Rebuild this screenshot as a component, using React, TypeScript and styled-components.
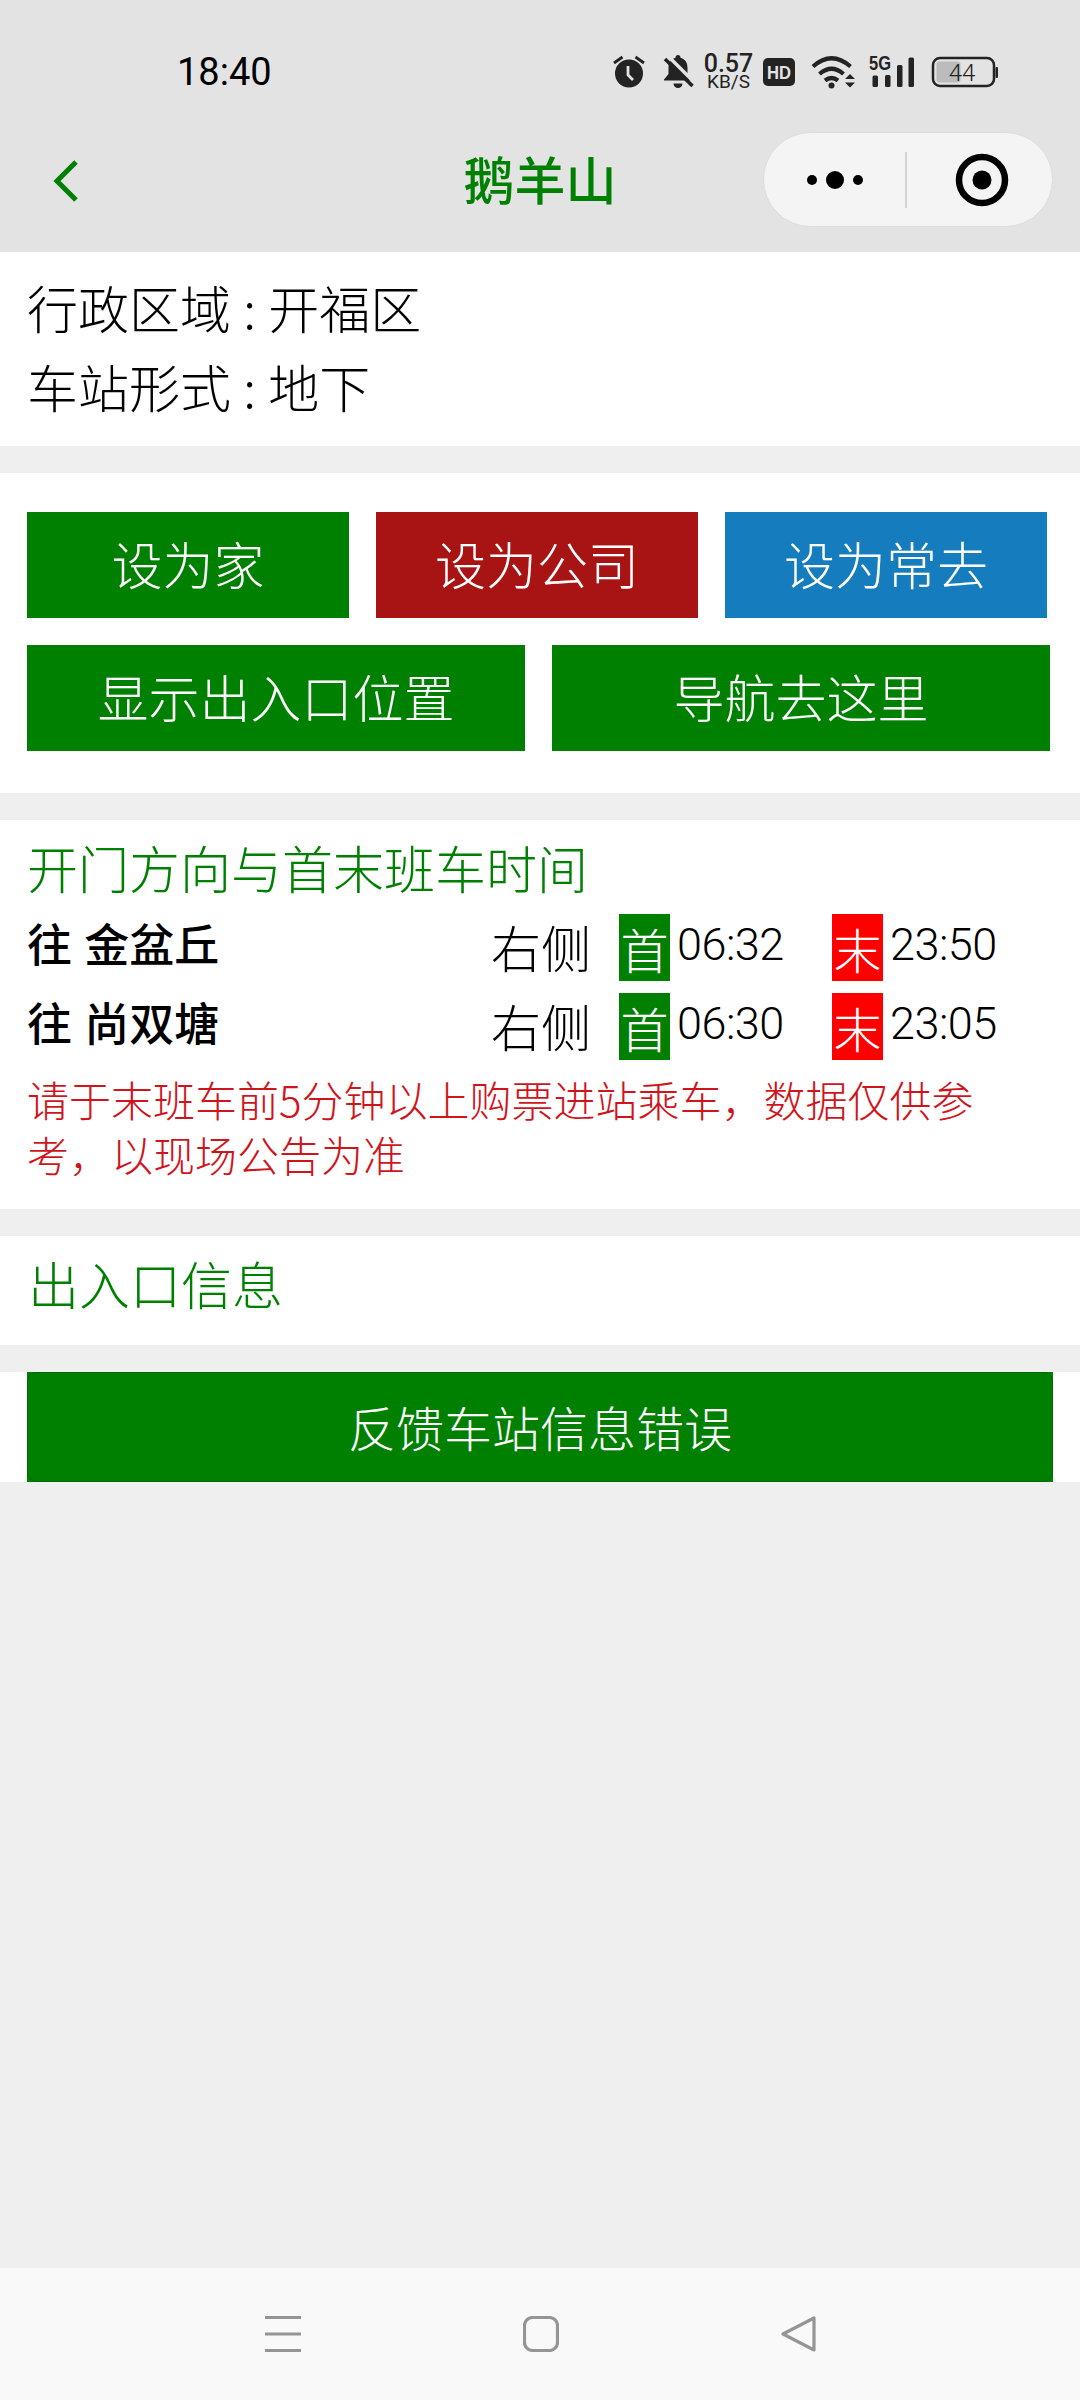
import React from "react";
import styled, { createGlobalStyle } from "styled-components";

const CJK = `"Noto Sans CJK SC", "Noto Sans", sans-serif`;
const GREEN = "#008000";
const ICON = "#232323";

const Global = createGlobalStyle`
  html, body { margin: 0; padding: 0; background: #efefef; }
  #root { width: 1080px; height: 2400px; overflow: hidden; }
  * { box-sizing: border-box; }
`;

const Page = styled.div`
  width: 1080px;
  height: 2400px;
  display: flex;
  flex-direction: column;
  background: #efefef;
  font-family: ${CJK};
  font-weight: 200;
  color: #000;
`;

const Header = styled.header`
  height: 252px;
  background: #e3e3e3;
  display: flex;
  flex-direction: column;
  flex: none;
`;

const StatusBar = styled.div`
  height: 128px;
  padding: 15px 0 0 177px;
  display: flex;
  align-items: center;
`;

const Clock = styled.span`
  font-family: Roboto, sans-serif;
  font-size: 38px;
  font-weight: 400;
  width: 436px;
`;

const StatusIcons = styled.div`
  display: flex;
  align-items: center;
  height: 40px;
`;

const StatusGlyph = styled.svg<{ $mr?: number; $mt?: number }>`
  flex: none;
  margin-right: ${(p) => p.$mr ?? 0}px;
  margin-top: ${(p) => p.$mt ?? 0}px;
`;

const Speed = styled.div`
  width: 49px;
  margin: 0 10px 0 10px;
  display: flex;
  flex-direction: column;
  align-items: center;
  font-family: Roboto, sans-serif;
  color: ${ICON};
  font-weight: 500;
`;

const SpeedValue = styled.span`
  font-size: 25px;
  height: 20px;
  line-height: 20px;
`;

const SpeedUnit = styled.span`
  font-size: 19px;
  height: 15px;
  line-height: 15px;
  font-weight: 400;
`;

const NavBar = styled.div`
  position: relative;
  flex: 1;
  display: flex;
  align-items: center;
  justify-content: center;
`;

const BackIcon = styled.svg`
  position: absolute;
  left: 52px;
  top: 31px;
`;

const NavTitle = styled.h1`
  margin: 0;
  font-size: 51px;
  font-weight: 500;
  color: ${GREEN};
  position: relative;
  top: -12px;
`;

const Capsule = styled.div`
  position: absolute;
  left: 763px;
  top: 4px;
  width: 290px;
  height: 95px;
  border-radius: 48px;
  background: #f4f4f4;
  border: 1px solid #dcdcdc;
  display: flex;
  align-items: center;
`;

const CapsulePart = styled.div<{ $pl?: number }>`
  flex: 1;
  height: 100%;
  padding-left: ${(p) => p.$pl ?? 0}px;
  display: flex;
  align-items: center;
  justify-content: center;
`;

const CapsuleDivider = styled.div`
  width: 2px;
  height: 56px;
  background: #d4d4d4;
`;

const Section = styled.section<{ $h: number; $mt?: number }>`
  flex: none;
  height: ${(p) => p.$h}px;
  margin-top: ${(p) => p.$mt ?? 27}px;
  background: #fff;
`;

const InfoSection = styled(Section)`
  padding: 16px 0 0 27px;
`;

const InfoLine = styled.div`
  font-size: 51px;
  line-height: 79px;
  color: #000;
  white-space: pre;
  word-spacing: 1px;
`;

const ButtonsSection = styled(Section)`
  padding: 39px 27px 0;
  display: flex;
  flex-direction: column;
  gap: 27px;
`;

const ButtonRow = styled.div`
  display: flex;
  gap: 27px;
`;

const ActionButton = styled.div<{ $bg: string; $w: number }>`
  width: ${(p) => p.$w}px;
  height: 106px;
  background: ${(p) => p.$bg};
  color: #fff;
  font-size: 51px;
  display: flex;
  align-items: center;
  justify-content: center;
  padding-bottom: 5px;
`;

const TimesSection = styled(Section)`
  padding: 19px 27px 0;
`;

const SectionTitle = styled.div`
  color: ${GREEN};
  font-size: 51px;
  line-height: 56px;
`;

const TimeRows = styled.div`
  margin-top: 19px;
  display: flex;
  flex-direction: column;
  gap: 12px;
`;

const TimeRow = styled.div`
  height: 67px;
  display: flex;
  align-items: center;
`;

const Direction = styled.div`
  width: 464px;
  font-size: 45px;
  font-weight: 500;
  word-spacing: 2px;
  position: relative;
  top: -5px;
`;

const Side = styled.div`
  width: 128px;
  font-size: 50px;
  color: #000;
  position: relative;
  top: -2px;
`;

const Tag = styled.div<{ $bg: string }>`
  width: 51px;
  height: 67px;
  background: ${(p) => p.$bg};
  color: #fff;
  font-size: 48px;
  display: flex;
  align-items: center;
  justify-content: center;
`;

const TimeText = styled.div`
  width: 162px;
  padding-left: 7px;
  font-size: 45px;
  letter-spacing: -0.5px;
  font-family: Roboto, sans-serif;
  font-weight: 300;
  position: relative;
  top: -3px;
  color: #000;
`;

const Notice = styled.div`
  margin-top: 11px;
  color: #d0141c;
  font-size: 42px;
  line-height: 55px;
  width: 1000px;
`;

const EntranceSection = styled(Section)`
  padding: 19px 27px 0 28px;
`;

const FeedbackSection = styled(Section)`
  padding: 0 27px;
`;

const FeedbackButton = styled.div`
  position: relative;
  height: 110px;
  background: ${GREEN};
  color: #fff;
  font-size: 48px;
  display: flex;
  align-items: center;
  justify-content: center;
  padding-bottom: 2px;

  &::after {
    content: "";
    position: absolute;
    inset: 0;
    border: 1px solid rgba(0, 0, 0, 0.2);
    border-radius: 9px;
  }
`;

const Spacer = styled.div`
  flex: 1;
`;

const BottomNav = styled.nav`
  flex: none;
  height: 132px;
  background: #f9f9f9;
  display: flex;
  align-items: flex-start;
  gap: 222px;
  padding: 48px 0 0 265px;
`;

const NavIcon = styled.svg<{ $w: number }>`
  width: ${(p) => p.$w}px;
  height: 36px;
  flex: none;
`;

const AlarmIcon = () => (
  <StatusGlyph $mr={18} width="32" height="33" viewBox="0 0 32 33">
    <circle cx="16" cy="18.500" r="14" fill={ICON} />
    <path d="M15 11v9l5 5" stroke="#e3e3e3" strokeWidth="2.800" fill="none" />
    <path d="M1 8l8.500-6M31 8l-8.500-6" stroke={ICON} strokeWidth="2.800" />
  </StatusGlyph>
);

const MuteIcon = () => (
  <StatusGlyph width="31" height="34" viewBox="0 0 31 34">
    <path d="M15 0c-1.500 0-2.500 1-2.500 2.800C7 4.500 5.500 8.500 5.500 13v6L1 24.500v1h28v-1L24.500 19v-6c0-4.500-1.500-8.500-7-10.200C17.500 1 16.500 0 15 0z" fill={ICON} />
    <path d="M10.500 28.500h9a4.500 4.500 0 0 1-9 0z" fill={ICON} />
    <path d="M5 1l28 28" stroke="#e3e3e3" strokeWidth="3.500" />
    <path d="M2 4l27.500 27" stroke={ICON} strokeWidth="3.600" />
  </StatusGlyph>
);

const HdIcon = () => (
  <StatusGlyph $mr={16} width="32" height="28" viewBox="0 0 32 28">
    <rect width="32" height="28" rx="5" fill={ICON} />
    <text x="16" y="21" textAnchor="middle" fontFamily="Liberation Sans" fontWeight="700" fontSize="19" textLength="24" lengthAdjust="spacingAndGlyphs" fill="#e3e3e3">HD</text>
  </StatusGlyph>
);

const WifiIcon = () => (
  <StatusGlyph $mr={13} width="45" height="34" viewBox="0 0 45 34">
    <path d="M2 11.500Q20.500-5 39.500 11.500M8.500 19Q20.500 8.500 32.500 19M14 25.500Q20.500 20.500 27 25.500" stroke={ICON} strokeWidth="4.200" fill="none" />
    <circle cx="20.500" cy="30.500" r="3" fill={ICON} />
    <path d="M34 24l5-5 5 5zM34 27.500l5 5 5-5z" fill={ICON} />
  </StatusGlyph>
);

const SignalIcon = () => (
  <StatusGlyph $mr={17} $mt={-4} width="45" height="37" viewBox="0 -4 45 37">
    <text x="0" y="14.500" fontFamily="Liberation Sans" fontWeight="700" fontSize="19.500" textLength="22" lengthAdjust="spacingAndGlyphs" fill={ICON}>5G</text>
    <rect x="3.500" y="20.500" width="5.500" height="11.500" rx="1.500" fill={ICON} />
    <rect x="16" y="20" width="5.500" height="12" rx="1.500" fill={ICON} />
    <rect x="28" y="10" width="5.500" height="22" rx="1.500" fill={ICON} />
    <rect x="39.500" y="2.500" width="5.500" height="29.500" rx="1.500" fill={ICON} />
  </StatusGlyph>
);

const BatteryIcon = () => (
  <StatusGlyph width="67" height="32" viewBox="0 0 67 32">
    <rect x="2" y="2" width="61" height="28" rx="7" fill="none" stroke={ICON} strokeWidth="2.500" />
    <rect x="5.500" y="5.500" width="24" height="21" rx="3" fill="#bcbcbc" />
    <rect x="64.500" y="11" width="2.500" height="11" rx="1" fill={ICON} />
    <text x="31" y="25" textAnchor="middle" fontFamily="Roboto" fontWeight="300" fontSize="24" fill="#222">44</text>
  </StatusGlyph>
);

export default function App() {
  return (
    <Page>
      <Global />
      <Header>
        <StatusBar>
          <Clock>18:40</Clock>
          <StatusIcons>
            <AlarmIcon />
            <MuteIcon />
            <Speed>
              <SpeedValue>0.57</SpeedValue>
              <SpeedUnit>KB/S</SpeedUnit>
            </Speed>
            <HdIcon />
            <WifiIcon />
            <SignalIcon />
            <BatteryIcon />
          </StatusIcons>
        </StatusBar>
        <NavBar>
          <BackIcon width="28" height="44" viewBox="0 0 28 44">
            <path d="M24 3L5 22l19 19" stroke={GREEN} strokeWidth="5" fill="none" />
          </BackIcon>
          <NavTitle>鹅羊山</NavTitle>
          <Capsule>
            <CapsulePart>
              <svg width="60" height="20" viewBox="0 0 60 20">
                <circle cx="7" cy="10" r="5" fill="#000" />
                <circle cx="30" cy="10" r="9" fill="#000" />
                <circle cx="53" cy="10" r="5" fill="#000" />
              </svg>
            </CapsulePart>
            <CapsuleDivider />
            <CapsulePart $pl={4}>
              <svg width="54" height="54" viewBox="0 0 54 54">
                <circle cx="27" cy="27" r="23" fill="none" stroke="#000" strokeWidth="6.500" />
                <circle cx="27" cy="27" r="9.500" fill="#000" />
              </svg>
            </CapsulePart>
          </Capsule>
        </NavBar>
      </Header>

      <InfoSection $h={194} $mt={0}>
        <InfoLine>行政区域 : 开福区</InfoLine>
        <InfoLine>车站形式 : 地下</InfoLine>
      </InfoSection>

      <ButtonsSection $h={320}>
        <ButtonRow>
          <ActionButton $bg="#008000" $w={322}>设为家</ActionButton>
          <ActionButton $bg="#a81414" $w={322}>设为公司</ActionButton>
          <ActionButton $bg="#157cbd" $w={322}>设为常去</ActionButton>
        </ButtonRow>
        <ButtonRow>
          <ActionButton $bg="#008000" $w={498}>显示出入口位置</ActionButton>
          <ActionButton $bg="#008000" $w={498}>导航去这里</ActionButton>
        </ButtonRow>
      </ButtonsSection>

      <TimesSection $h={389}>
        <SectionTitle>开门方向与首末班车时间</SectionTitle>
        <TimeRows>
          <TimeRow>
            <Direction>往 金盆丘</Direction>
            <Side>右侧</Side>
            <Tag $bg="#008000">首</Tag>
            <TimeText>06:32</TimeText>
            <Tag $bg="#ff0000">末</Tag>
            <TimeText>23:50</TimeText>
          </TimeRow>
          <TimeRow>
            <Direction>往 尚双塘</Direction>
            <Side>右侧</Side>
            <Tag $bg="#008000">首</Tag>
            <TimeText>06:30</TimeText>
            <Tag $bg="#ff0000">末</Tag>
            <TimeText>23:05</TimeText>
          </TimeRow>
        </TimeRows>
        <Notice>请于末班车前5分钟以上购票进站乘车，数据仅供参考，以现场公告为准</Notice>
      </TimesSection>

      <EntranceSection $h={109}>
        <SectionTitle>出入口信息</SectionTitle>
      </EntranceSection>

      <FeedbackSection $h={110}>
        <FeedbackButton>反馈车站信息错误</FeedbackButton>
      </FeedbackSection>

      <Spacer />

      <BottomNav>
        <NavIcon $w={36} viewBox="0 0 36 36">
          <path d="M0 1.500h36M0 18h36M0 34.500h36" stroke="#959595" strokeWidth="3.200" />
        </NavIcon>
        <NavIcon $w={36} viewBox="0 0 36 36">
          <rect x="1.500" y="1.500" width="33" height="33" rx="8" fill="none" stroke="#959595" strokeWidth="3.200" />
        </NavIcon>
        <NavIcon $w={35} viewBox="0 0 35 36">
          <path d="M2 18L33 2v32z" fill="none" stroke="#959595" strokeWidth="3.200" strokeLinejoin="round" />
        </NavIcon>
      </BottomNav>
    </Page>
  );
}
